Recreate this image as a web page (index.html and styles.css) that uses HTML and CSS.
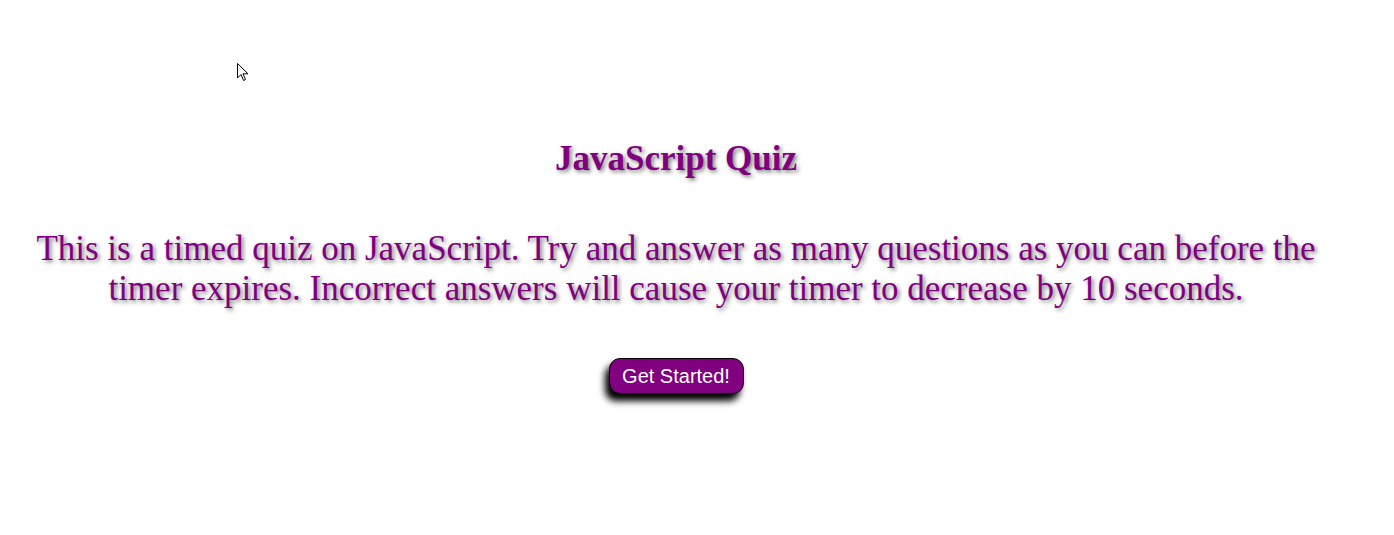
FILE: index.html
```html
<!DOCTYPE html>
<html>
<head>
<meta charset="utf-8">
<link rel="stylesheet" href="styles.css">
</head>
<body>
<main class="quiz">
  <h1 class="title">JavaScript Quiz</h1>
  <p class="intro">This is a timed quiz on JavaScript. Try and answer as many questions as you can before the timer expires. Incorrect answers will cause your timer to decrease by 10 seconds.</p>
  <button class="start">Get Started!</button>
</main>
<svg class="cursor" width="14" height="20" viewBox="0 0 14 20"><path d="M0.5 0.5 L0.5 15 L4 11.5 L6.5 17.5 L8.5 16.5 L6 10.8 L11 10.8 Z" fill="#fff" stroke="#000" stroke-width="1"/></svg>
</body>
</html>
```

FILE: styles.css
```css
html, body {
  margin: 0;
  padding: 0;
  background: #fff;
}
body {
  min-height: 535px;
  font-family: "Liberation Serif", "Times New Roman", serif;
}
.quiz {
  width: 1352px;
  display: flex;
  flex-direction: column;
  align-items: center;
  padding: 139px 0 60px;
}
.title {
  margin: 0;
  font-size: 35px;
  line-height: 40px;
  font-weight: bold;
  color: #800080;
  text-shadow: 2px 2px 4px #777;
}
.intro {
  margin: 50px 0 0;
  font-size: 35px;
  line-height: 40px;
  text-align: center;
  color: #800080;
  text-shadow: 2px 2px 4px #777;
}
.start {
  margin-top: 49px;
  width: 135px;
  height: 36px;
  padding: 0;
  background: #800080;
  color: #fff;
  font-family: "Liberation Sans", Arial, sans-serif;
  font-size: 20px;
  border: 1px solid #000;
  border-radius: 11px;
  box-shadow: -4px 7px 7px #000;
}
.cursor {
  position: absolute;
  left: 237px;
  top: 63px;
}
```
